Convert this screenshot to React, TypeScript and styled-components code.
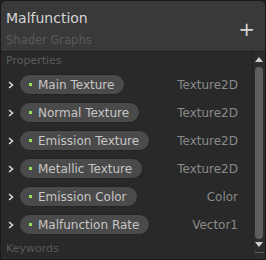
import React from "react";
import styled, { createGlobalStyle } from "styled-components";

const GlobalStyle = createGlobalStyle`
  html, body {
    margin: 0;
    padding: 0;
    background: #1e1e1e;
  }
  * {
    box-sizing: border-box;
  }
`;

type Property = { name: string; type: string };

const properties: Property[] = [
  { name: "Main Texture", type: "Texture2D" },
  { name: "Normal Texture", type: "Texture2D" },
  { name: "Emission Texture", type: "Texture2D" },
  { name: "Metallic Texture", type: "Texture2D" },
  { name: "Emission Color", type: "Color" },
  { name: "Malfunction Rate", type: "Vector1" },
];

function Chevron() {
  return (
    <ChevronSvg width="8" height="8" viewBox="0 0 8 8">
      <path d="M2 1 L5.5 4 L2 7" fill="none" stroke="#d8d8d8" strokeWidth="1.6" />
    </ChevronSvg>
  );
}

function Arrow(props: { down?: boolean }) {
  return (
    <svg width="8" height="5" viewBox="0 0 8 5">
      {props.down ? (
        <path d="M0 0 H8 L4 5 Z" fill="#d0d0d0" />
      ) : (
        <path d="M0 5 H8 L4 0 Z" fill="#d0d0d0" />
      )}
    </svg>
  );
}

export default function App() {
  return (
    <>
      <GlobalStyle />
      <Panel>
        <Header>
          <TitleBlock>
            <Title>Malfunction</Title>
            <Subtitle>Shader Graphs</Subtitle>
          </TitleBlock>
          <AddButton>+</AddButton>
        </Header>
        <Body>
          <Content>
            <SectionLabel>Properties</SectionLabel>
            <List>
              {properties.map((p) => (
                <Row key={p.name}>
                  <Chevron />
                  <Pill>
                    <Dot />
                    {p.name}
                  </Pill>
                  <TypeLabel>{p.type}</TypeLabel>
                </Row>
              ))}
            </List>
            <SectionLabel>Keywords</SectionLabel>
          </Content>
          <ScrollBar>
            <Arrow />
            <Thumb />
            <Arrow down />
            <ScrollEnd />
          </ScrollBar>
        </Body>
      </Panel>
    </>
  );
}

const Panel = styled.div`
  width: 266px;
  height: 260px;
  display: flex;
  flex-direction: column;
  background: #292929;
  border: 1px solid #1a1a1a;
  border-radius: 6px 6px 0 0;
  overflow: hidden;
  font-family: "DejaVu Sans", Verdana, sans-serif;
`;

const Header = styled.div`
  height: 51px;
  flex-shrink: 0;
  display: flex;
  flex-direction: row;
  align-items: flex-start;
  justify-content: space-between;
  background: #393939;
  border-bottom: 1px solid #202020;
  padding: 7px 10px 0 5px;
`;

const TitleBlock = styled.div`
  display: flex;
  flex-direction: column;
`;

const Title = styled.div`
  font-size: 14px;
  color: #d4d4d4;
  line-height: 20px;
`;

const Subtitle = styled.div`
  font-size: 11.5px;
  color: #5a5a5a;
  line-height: 14px;
  margin-top: 5px;
`;

const AddButton = styled.div`
  font-size: 20px;
  color: #d4d4d4;
  line-height: 20px;
  margin-top: 11px;
`;

const Body = styled.div`
  flex: 1;
  display: flex;
  flex-direction: row;
  min-height: 0;
`;

const Content = styled.div`
  flex: 1;
  display: flex;
  flex-direction: column;
  padding: 1px 0 0 5px;
`;

const SectionLabel = styled.div`
  font-size: 11px;
  color: #5a5a5a;
  line-height: 16px;
`;

const List = styled.div`
  display: flex;
  flex-direction: column;
  gap: 7px;
  padding: 5px 0 6px 0;
`;

const Row = styled.div`
  height: 21px;
  display: flex;
  flex-direction: row;
  align-items: center;
`;

const ChevronSvg = styled.svg`
  margin: 0 4px 0 1px;
  flex-shrink: 0;
`;

const Pill = styled.div`
  height: 21px;
  display: flex;
  align-items: center;
  gap: 6px;
  padding: 0 10px 0 9px;
  border-radius: 11px;
  background: #4a4a4a;
  border: 1px solid #232323;
  color: #c6c6c6;
  font-size: 12px;
  white-space: nowrap;
`;

const Dot = styled.span`
  display: block;
  flex-shrink: 0;
  width: 3px;
  height: 3px;
  background: #98e05a;
`;

const TypeLabel = styled.div`
  margin-left: auto;
  padding-right: 14px;
  font-size: 12px;
  color: #8a8a8a;
`;

const ScrollBar = styled.div`
  width: 13px;
  display: flex;
  flex-direction: column;
  align-items: center;
  padding-top: 5px;
  gap: 3px;
  border-left: 1px solid #222222;
  background: #2c2c2c;
`;

const Thumb = styled.div`
  flex: 1;
  width: 8px;
  margin-top: 2px;
  border-radius: 4px;
  background: #5e5e5e;
`;

const ScrollEnd = styled.div`
  width: 9px;
  height: 1px;
  margin: 2px 0 6px;
  background: #5e5e5e;
`;
